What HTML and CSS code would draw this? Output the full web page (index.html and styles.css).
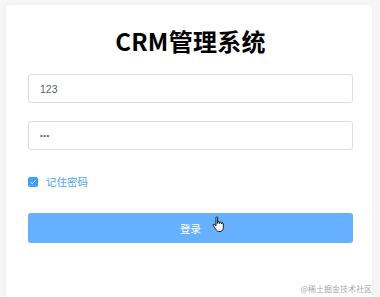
FILE: index.html
```html
<!DOCTYPE html>
<html lang="zh-CN">
  <head>
    <meta charset="UTF-8" />
    <meta name="viewport" content="width=device-width, initial-scale=1.0" />
    <link rel="stylesheet" href="styles.css">
    <title>CRM管理系统</title>
  </head>
  <body>
    <div class="login-card">
      <h1 class="login-title">CRM管理系统</h1>

      <form class="login-form">
        <div class="form-item">
          <input class="form-input" type="text" name="username" value="123" />
        </div>
        <div class="form-item">
          <input class="form-input" type="password" name="password" value="123" />
        </div>
        <div class="form-item remember">
          <label class="checkbox">
            <span class="checkbox-box">
              <svg viewBox="0 0 10 10" width="10" height="10">
                <path d="M2.8 5.2 L4.4 6.7 L7.3 3.4" fill="none" stroke="#fff" stroke-width="1" />
              </svg>
            </span>
            <span class="checkbox-label">记住密码</span>
          </label>
        </div>
        <button class="login-btn" type="button">登录</button>
      </form>

      <!-- hand cursor over the button -->
      <svg class="cursor" viewBox="0 0 14 18" width="14" height="18">
        <path d="M4 1.5 C4 0.7 5.6 0.7 5.6 1.5 L5.6 7.5 L5.8 6.2 C6 5.4 7.4 5.4 7.5 6.3 L7.6 7.6 L7.9 6.6 C8.1 5.9 9.4 5.9 9.5 6.8 L9.6 8 L9.9 7.3 C10.2 6.7 11.3 6.9 11.3 7.7 L11.3 11.5 C11.3 13.5 10.3 15 8.8 15.5 L6.3 15.5 C5 15 4.1 13.7 3.3 12.4 L1.2 9.4 C0.7 8.6 1.8 7.7 2.6 8.4 L4 9.8 Z" fill="#fff" stroke="#000" stroke-width="0.9" stroke-linejoin="round" />
      </svg>
    </div>

    <span class="watermark">@稀土掘金技术社区</span>
  </body>
</html>
```

FILE: styles.css
```css
* {
  margin: 0;
  padding: 0;
  box-sizing: border-box;
}

html,
body {
  height: 100%;
  overflow: hidden;
}

body {
  background-color: #f6f6f6;
  padding: 5px 8px 0 6px;
  font-family: "Noto Sans CJK SC", "Liberation Sans", sans-serif;
}

.login-card {
  position: relative;
  height: 100%;
  background-color: #fff;
  border-radius: 4px 4px 0 0;
  box-shadow: 0 0 4px rgba(0, 0, 0, 0.04);
  padding-top: 20px;
}

.login-title {
  text-align: center;
  font-size: 24px;
  line-height: 32px;
  font-weight: 700;
  color: #000;
  padding-left: 3px;
  letter-spacing: 0.3px;
}

.login-form {
  width: 325px;
  margin: 17px 0 0 22px;
}

.form-item {
  margin-bottom: 18px;
}

.form-input {
  display: block;
  width: 100%;
  height: 29px;
  padding: 0 11px;
  border: 1px solid #dcdfe6;
  border-radius: 3px;
  background: #fff;
  color: #606266;
  font-family: "Liberation Sans", Arial, sans-serif;
  font-size: 10.5px;
  outline: none;
}

.form-input[type="password"] {
  font-size: 8px;
  letter-spacing: 0.5px;
}

.remember {
  height: 30px;
  margin-top: -1px;
  margin-bottom: 16px;
  display: flex;
  align-items: center;
}

.checkbox {
  display: flex;
  align-items: center;
  gap: 8px;
}

.checkbox-box {
  width: 10px;
  height: 10px;
  border-radius: 2px;
  background-color: #409eff;
  display: flex;
}

.checkbox-label {
  font-size: 10.5px;
  color: #4aa3ff;
  line-height: 12px;
}

.login-btn {
  display: block;
  width: 100%;
  height: 30px;
  border: none;
  border-radius: 3px;
  background-color: #66b1ff;
  color: #fff;
  font-family: "Noto Sans CJK SC", sans-serif;
  font-size: 10.5px;
}

.cursor {
  position: absolute;
  left: 206px;
  top: 211px;
}

.watermark {
  position: absolute;
  right: 8px;
  bottom: 3px;
  font-size: 8px;
  color: #a8a8a8;
}
```
